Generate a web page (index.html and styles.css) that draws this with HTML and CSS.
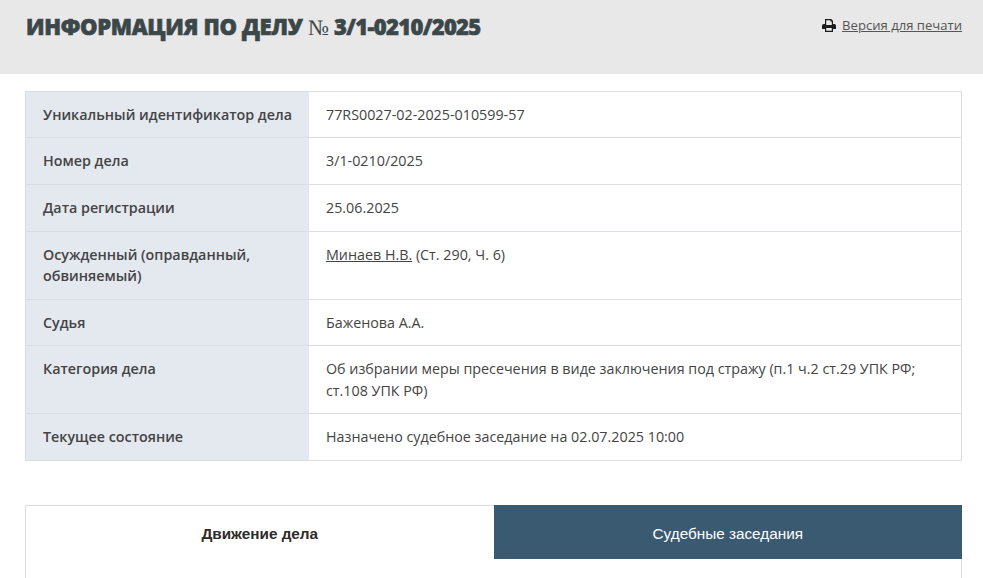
FILE: index.html
```html
<!DOCTYPE html>
<html lang="ru">
<head>
<meta charset="utf-8">
<title>Информация по делу</title>
<link rel="stylesheet" href="styles.css">
</head>
<body>
<header class="head">
  <h1 class="title">ИНФОРМАЦИЯ ПО ДЕЛУ <span class="num">№</span> <span class="case">3/1-0210/2025</span></h1>
  <a class="print" href="#">
    <svg class="print-icon" viewBox="0 0 14 13" aria-hidden="true"><path d="M3 0h6.2L11 1.8V5h1.2A1.8 1.8 0 0 1 14 6.8V10h-3v3H3v-3H0V6.8A1.8 1.8 0 0 1 1.8 5H3zM4.2 1.2V6h5.6V2.6H8.4V1.2zM4.2 9v2.8h5.6V9z" fill-rule="evenodd"/></svg>
    <span class="print-text">Версия для печати</span>
  </a>
</header>
<main class="content">
  <div class="info">
    <div class="row r1"><div class="k">Уникальный идентификатор дела</div><div class="v">77RS0027-02-2025-010599-57</div></div>
    <div class="row r2"><div class="k">Номер дела</div><div class="v">3/1-0210/2025</div></div>
    <div class="row r2"><div class="k">Дата регистрации</div><div class="v">25.06.2025</div></div>
    <div class="row r3"><div class="k">Осужденный (оправданный, обвиняемый)</div><div class="v"><a class="person" href="#">Минаев Н.В.</a> (Ст. 290, Ч. 6)</div></div>
    <div class="row r1"><div class="k">Судья</div><div class="v">Баженова А.А.</div></div>
    <div class="row r3"><div class="k">Категория дела</div><div class="v">Об избрании меры пресечения в виде заключения под стражу (п.1 ч.2 ст.29 УПК РФ; ст.108 УПК РФ)</div></div>
    <div class="row r2 last"><div class="k">Текущее состояние</div><div class="v">Назначено судебное заседание на 02.07.2025 10:00</div></div>
  </div>
  <div class="tabs">
    <div class="tab active">Движение дела</div>
    <div class="tab">Судебные заседания</div>
  </div>
</main>
</body>
</html>
```
FILE: styles.css
```css
* { box-sizing: border-box; }
html, body { margin: 0; padding: 0; }
body {
  background: #fff;
  color: #444;
  font-family: "Open Sans", "Liberation Sans", sans-serif;
  font-size: 14.3px;
  overflow: hidden;
  height: 578px;
}
.head {
  height: 74px;
  background: #e8e8e8;
  padding: 0 21px 0 26px;
  display: flex;
  justify-content: space-between;
  align-items: flex-start;
}
.title {
  margin: 12px 0 0;
  font-family: "Open Sans", sans-serif;
  font-weight: 800;
  font-size: 22px;
  line-height: 28px;
  letter-spacing: -0.35px;
  -webkit-text-stroke: 0.6px #3b4748;
  color: #3b4748;
  white-space: nowrap;
}
.num {
  font-family: "Liberation Serif", serif;
  font-weight: 400;
  -webkit-text-stroke: 0;
  letter-spacing: 0;
}
.case { letter-spacing: -0.68px; }
.print {
  margin-top: 15px;
  display: flex;
  align-items: center;
  gap: 6px;
  font-size: 13.1px;
  line-height: 20px;
  color: #555;
  text-decoration: none;
}
.print-icon { width: 14px; height: 13px; fill: #1c1c1c; }
.print-text { text-decoration: underline; }
.content { padding: 17px 21px 0 25px; }
.info { border: 1px solid #dadde1; border-bottom-width: 0; }
.row { display: grid; grid-template-columns: 283px 1fr; border-bottom: 1px solid #dadde1; }
.r1 { height: 46px; }
.r2 { height: 47px; }
.r3 { height: 68px; }
.k {
  background: #e4e9f0;
  padding: 12px 17px 0;
  font-weight: 600;
  line-height: 21px;
  color: #444;
}
.v { padding: 12px 17px 0; line-height: 22px; }
.person { color: #444; }
.tabs {
  margin-top: 44px;
  display: grid;
  grid-template-columns: 1fr 1fr;
  height: 73px;
  border-left: 1px solid #dadde1;
  border-right: 1px solid #dadde1;
  align-items: start;
  font-family: "Liberation Sans", sans-serif;
  font-size: 15.3px;
}
.tab {
  height: 54px;
  margin-right: -1px;
  padding-top: 3px;
  display: flex;
  align-items: center;
  justify-content: center;
  background: #3a5a72;
  color: #fff;
}
.tab.active {
  height: 73px;
  margin-right: 0;
  background: #fff;
  color: #2e2a28;
  font-weight: 700;
  border-top: 1px solid #dadde1;
  padding-top: 0;
  padding-bottom: 17px;
}
```
